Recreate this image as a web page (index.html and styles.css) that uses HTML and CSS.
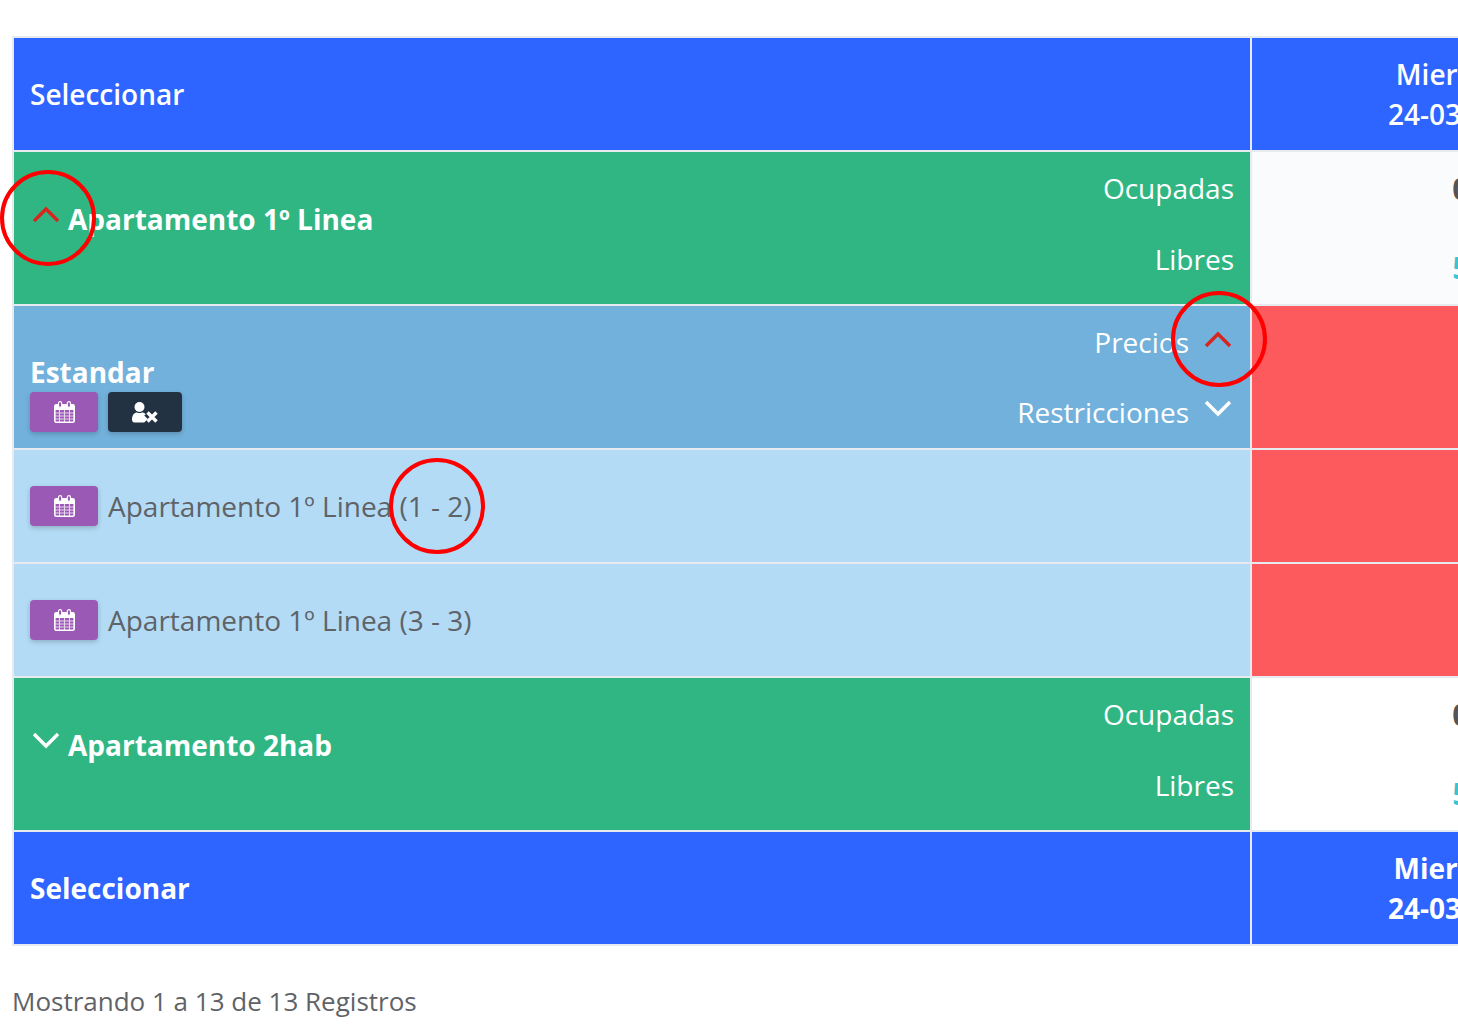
FILE: index.html
```html
<!DOCTYPE html>
<html lang="es">
<head>
    <meta charset="UTF-8">
    <title>Disponibilidad</title>
    <link rel="stylesheet" href="styles.css">
</head>
<body>
    <svg class="icon-defs" width="0" height="0">
        <symbol id="cal" viewBox="0 0 21 22">
            <rect x="0.800" y="3.800" width="19.400" height="17.400" rx="1.500" fill="none" stroke="#fff" stroke-width="1.600"/>
            <path d="M1 4h19v5h-19z" fill="#fff"/>
            <path d="M1 12h19M1 15h19M1 18h19M5.500 9v12M10.500 9v12M15.500 9v12" stroke="#fff" stroke-width="1.100" opacity="0.750"/>
            <rect x="4.500" y="0.600" width="3.200" height="5.800" rx="1.600" fill="#9b59b6" stroke="#fff" stroke-width="1.100"/>
            <rect x="13.300" y="0.600" width="3.200" height="5.800" rx="1.600" fill="#9b59b6" stroke="#fff" stroke-width="1.100"/>
        </symbol>
        <symbol id="user-x" viewBox="0 0 26 21">
            <circle cx="7.500" cy="5" r="5" fill="#fff"/>
            <path d="M0 17.500C0 13 2.500 10.500 5 10.500c1.500.8 3.500.8 5 0 1.500 0 2.800.6 3.700 1.700l-1.400 1.400 3.400 3.400-3.200 3.200-.2.3H2.500C1 20.500 0 19.300 0 17.500z" fill="#fff"/>
            <path d="M15.500 10.500l9 9M24.500 10.500l-9 9" fill="none" stroke="#fff" stroke-width="3.400"/>
        </symbol>
        <symbol id="chev-up" viewBox="0 0 28 17">
            <path d="M2 15L14 3l12 12" fill="none" stroke="currentColor" stroke-width="3.400"/>
        </symbol>
        <symbol id="chev-down" viewBox="0 0 28 17">
            <path d="M2 2l12 12L26 2" fill="none" stroke="currentColor" stroke-width="3.400"/>
        </symbol>
    </svg>

    <div class="table-wrap">
        <table class="grid">
            <colgroup>
                <col class="col-name">
                <col class="col-day">
            </colgroup>
            <tr class="row-head">
                <td class="cell-pad">Seleccionar</td>
                <td class="day">Miercoles<br>24-03-2021</td>
            </tr>
            <tr class="row-room">
                <td class="green">
                    <div class="split">
                        <div class="room-title">
                            <svg class="chev chev-red"><use href="#chev-up"/></svg>
                            <span>Apartamento 1º Linea</span>
                        </div>
                        <div class="side-labels">
                            <span>Ocupadas</span>
                            <span>Libres</span>
                        </div>
                    </div>
                </td>
                <td class="count count-soft"><b>0</b><b class="free">5</b></td>
            </tr>
            <tr class="row-rate">
                <td class="blue">
                    <div class="split split-rate">
                        <div class="rate-title">
                            <strong>Estandar</strong>
                            <div class="btns">
                                <a class="btn btn-purple"><svg class="ico-cal"><use href="#cal"/></svg></a>
                                <a class="btn btn-dark"><svg class="ico-user"><use href="#user-x"/></svg></a>
                            </div>
                        </div>
                        <div class="rate-labels">
                            <div class="rate-label"><span>Precios</span><svg class="chev chev-red"><use href="#chev-up"/></svg></div>
                            <div class="rate-label"><span>Restricciones</span><svg class="chev chev-low"><use href="#chev-down"/></svg></div>
                        </div>
                    </div>
                </td>
                <td class="red"></td>
            </tr>
            <tr class="row-occ">
                <td class="light">
                    <div class="occ">
                        <a class="btn btn-purple"><svg class="ico-cal"><use href="#cal"/></svg></a>
                        <span>Apartamento 1º Linea (1 - 2)</span>
                    </div>
                </td>
                <td class="red"></td>
            </tr>
            <tr class="row-occ">
                <td class="light">
                    <div class="occ">
                        <a class="btn btn-purple"><svg class="ico-cal"><use href="#cal"/></svg></a>
                        <span>Apartamento 1º Linea (3 - 3)</span>
                    </div>
                </td>
                <td class="red"></td>
            </tr>
            <tr class="row-room">
                <td class="green">
                    <div class="split">
                        <div class="room-title">
                            <svg class="chev"><use href="#chev-down"/></svg>
                            <span>Apartamento 2hab</span>
                        </div>
                        <div class="side-labels">
                            <span>Ocupadas</span>
                            <span>Libres</span>
                        </div>
                    </div>
                </td>
                <td class="count"><b>0</b><b class="free">5</b></td>
            </tr>
            <tr class="row-head row-foot">
                <td class="cell-pad">Seleccionar</td>
                <td class="day">Miercoles<br>24-03-2021</td>
            </tr>
        </table>

        <div class="ring ring-a"></div>
        <div class="ring ring-b"></div>
        <div class="ring ring-c"></div>
    </div>

    <p class="records">Mostrando 1 a 13 de 13 Registros</p>
</body>
</html>
```

FILE: styles.css
```css
html, body {
    margin: 0;
    padding: 0;
    height: 1032px;
    overflow: hidden;
    background-color: #fff;
}

body {
    font-family: "Open Sans", Arial, sans-serif;
    font-size: 28px;
    color: #5f6367;
}

.icon-defs {
    position: absolute;
}

.table-wrap {
    position: relative;
    padding: 36px 0 0 12px;
    width: 1700px;
}

.grid {
    border-collapse: separate;
    border-spacing: 0;
    table-layout: fixed;
    width: 1660px;
    border-top: 2px solid #e7ebf0;
    border-left: 2px solid #e7ebf0;
}

.col-name {
    width: 1238px;
}

.grid td {
    padding: 0;
    border-right: 2px solid #e7ebf0;
    border-bottom: 2px solid #e7ebf0;
}

/* header and footer rows */
.row-head {
    height: 114px;
}

.row-head td {
    background-color: #2e64ff;
    color: #fff;
    font-weight: 600;
}

.cell-pad {
    padding-left: 16px !important;
}

.day {
    text-align: center;
    line-height: 40px;
}

.row-foot td {
    font-weight: 700;
}

/* room rows */
.row-room {
    height: 154px;
}

.grid .green {
    background-color: #30b683;
    color: #fff;
    vertical-align: top;
}

.split {
    display: flex;
    justify-content: space-between;
    align-items: stretch;
    height: 152px;
}

.split-rate {
    height: 142px;
}

.room-title {
    display: flex;
    align-items: center;
    gap: 8px;
    padding: 0 0 18px 18px;
    font-weight: 700;
}

.room-title .chev {
    margin-top: -10px;
}

.side-labels {
    display: flex;
    flex-direction: column;
    align-items: flex-end;
    gap: 33px;
    padding: 17px 16px 0 0;
    line-height: 38px;
}

.chev {
    width: 28px;
    height: 17px;
    color: #fff;
    flex: none;
}

.chev-red {
    color: #d8261f;
}

.count {
    background-color: #fff;
    text-align: center;
    vertical-align: top;
    color: #555;
    font-size: 31px;
}

.count-soft {
    background-color: #fafbfd;
}

.count b {
    display: block;
    line-height: 38px;
}

.count b:first-child {
    margin-top: 17px;
}

.count .free {
    margin-top: 41px;
    color: #3bc4cf;
}

/* rate row */
.row-rate {
    height: 144px;
}

.grid .blue {
    background-color: #72b1dc;
    color: #fff;
    vertical-align: top;
}

.red {
    background-color: #fc5a5c;
}

.rate-title {
    display: flex;
    flex-direction: column;
    justify-content: flex-end;
    padding: 0 0 16px 16px;
}

.rate-title strong {
    line-height: 38px;
    margin-bottom: 1px;
}

.btns {
    display: flex;
    gap: 10px;
}

.btn {
    display: flex;
    align-items: center;
    justify-content: center;
    height: 40px;
    width: 68px;
    border-radius: 4px;
    box-shadow: 0 2px 5px rgba(0, 0, 0, 0.2);
}

.btn-purple {
    background-color: #9b59b6;
}

.btn-dark {
    background-color: #233242;
    width: 74px;
}

.ico-cal {
    width: 21px;
    height: 22px;
}

.ico-user {
    width: 26px;
    height: 21px;
}

.rate-labels {
    display: flex;
    flex-direction: column;
    gap: 32px;
    padding: 17px 18px 0 0;
}

.rate-label {
    display: flex;
    justify-content: flex-end;
    gap: 15px;
    line-height: 38px;
}

.rate-label .chev {
    margin-top: 8px;
}

.rate-label .chev-low {
    margin-top: 7px;
}

/* occupancy rows */
.row-occ {
    height: 114px;
}

.light {
    background-color: #b3dbf6;
}

.occ {
    display: flex;
    align-items: center;
    gap: 10px;
    padding-left: 16px;
}

/* hand drawn marks over the table */
.ring {
    position: absolute;
    width: 88px;
    height: 88px;
    border: 4px solid #f00;
    border-radius: 50%;
    box-sizing: content-box;
}

.ring-a {
    left: 0;
    top: 170px;
}

.ring-b {
    left: 1171px;
    top: 291px;
}

.ring-c {
    left: 389px;
    top: 458px;
}

.records {
    margin: 38px 0 0 12px;
    font-size: 26px;
    line-height: 34px;
}
```
